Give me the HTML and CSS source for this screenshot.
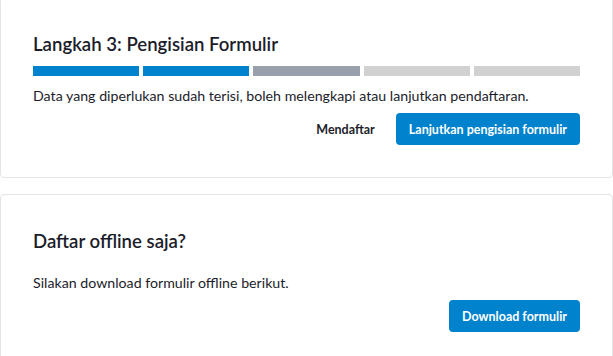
FILE: index.html
```html
<!DOCTYPE html>
<html lang="id">
<head>
<meta charset="utf-8">
<title>Pendaftaran</title>
<link rel="stylesheet" href="styles.css">
</head>
<body>
  <section class="card card-first">
    <h2 class="title">Langkah 3: Pengisian Formulir</h2>
    <div class="progress">
      <span class="seg done"></span>
      <span class="seg done"></span>
      <span class="seg current"></span>
      <span class="seg todo"></span>
      <span class="seg todo"></span>
    </div>
    <p class="desc">Data yang diperlukan sudah terisi, boleh melengkapi atau lanjutkan pendaftaran.</p>
    <div class="actions">
      <button class="btn btn-link" type="button">Mendaftar</button>
      <button class="btn btn-primary" type="button">Lanjutkan pengisian formulir</button>
    </div>
  </section>
  <section class="card">
    <h2 class="title">Daftar offline saja?</h2>
    <p class="desc desc-spaced">Silakan download formulir offline berikut.</p>
    <div class="actions">
      <button class="btn btn-primary" type="button">Download formulir</button>
    </div>
  </section>
</body>
</html>
```

FILE: styles.css
```css
html, body {
  margin: 0;
  padding: 0;
  background: #ffffff;
}
body {
  font-family: "Lato", "Noto Sans", sans-serif;
  color: #1c1d2a;
  overflow: hidden;
}
.card {
  border: 1px solid #e4e4e4;
  border-radius: 4px;
  padding: 34px 32px 32px;
  margin: 0 0 16px 0;
  background: #fff;
}
.card-first {
  margin-top: -3px;
}
.title {
  margin: 0;
  font-size: 18.6px;
  line-height: 24px;
  font-weight: 600;
}
.progress {
  display: flex;
  gap: 4px;
  height: 10px;
  margin-top: 10px;
}
.seg {
  flex: 1;
  display: block;
}
.seg.done { background: #0082cd; }
.seg.current { background: #9aa0ab; }
.seg.todo { background: #d1d1d1; }
.desc {
  margin: 10px 0 0;
  font-size: 14.2px;
  line-height: 20px;
}
.desc-spaced {
  margin-top: 20px;
}
.actions {
  display: flex;
  justify-content: flex-end;
  align-items: center;
  margin-top: 7px;
  gap: 8px;
}
.btn {
  height: 32px;
  padding: 0 13px;
  font-family: inherit;
  font-size: 12.5px;
  font-weight: 700;
  border: 0;
  border-radius: 4px;
  cursor: pointer;
}
.btn-link {
  background: transparent;
  color: #1c1d2a;
}
.btn-primary {
  background: #0082cd;
  color: #ffffff;
}
```
